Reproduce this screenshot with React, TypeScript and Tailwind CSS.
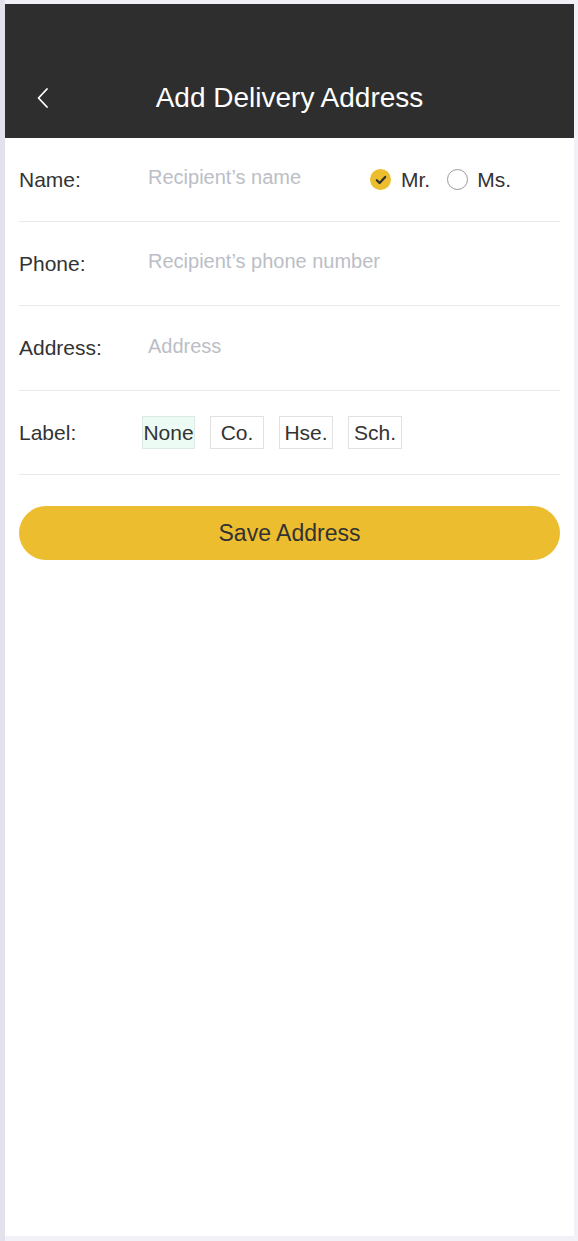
import React from "react";

const font = { fontFamily: '"Liberation Sans", Arial, sans-serif' };

function Row({ label, children, h = "h-[84px]" }: { label: string; children?: React.ReactNode; h?: string }) {
  return (
    <div className={"flex items-center border-b border-[#ebebeb] " + h}>
      <div className="w-[129px] shrink-0 text-[21px] text-[#333333]">{label}</div>
      <div className="flex flex-1 items-center">{children}</div>
    </div>
  );
}

export default function App() {
  const tags = ["None", "Co.", "Hse.", "Sch."];
  return (
    <div className="flex h-[1241px] w-full bg-[#f3f1f8]" style={font}>
      <div className="w-[5px] shrink-0 bg-[#e4e1ec]" />
      <div className="mb-[5px] mr-[4px] mt-[4px] flex flex-1 flex-col bg-white">
        <div className="bg-[#2e2e2e] pt-[54px]">
          <div className="relative flex h-[80px] items-center justify-center">
            <svg
              className="absolute left-[31px] top-[29px]"
              width="14"
              height="22"
              viewBox="0 0 14 22"
              fill="none"
              stroke="white"
              strokeWidth="1.8"
              strokeLinecap="round"
              strokeLinejoin="round"
            >
              <path d="M11 2 L2.5 11 L11 20" />
            </svg>
            <span className="text-[28px] text-white">Add Delivery Address</span>
          </div>
        </div>
        <div className="px-[14px]">
          <Row label="Name:">
            <span className="-mt-[5px] w-[222px] text-[20px] text-[#bbbec6]">Recipient’s name</span>
            <div className="flex items-center">
              <span className="flex h-[21px] w-[21px] items-center justify-center rounded-full bg-[#ebbd2f]">
                <svg width="12" height="10" viewBox="0 0 12 10" fill="none" stroke="#2e2e2e" strokeWidth="2.2" strokeLinecap="round" strokeLinejoin="round">
                  <path d="M1.8 5.2 L4.6 8 L10.2 2" />
                </svg>
              </span>
              <span className="ml-[10px] text-[21px] text-[#333333]">Mr.</span>
              <span className="ml-[17px] h-[21px] w-[21px] rounded-full border-[1.5px] border-[#9a9a9a]" />
              <span className="ml-[9px] text-[21px] text-[#333333]">Ms.</span>
            </div>
          </Row>
          <Row label="Phone:">
            <span className="-mt-[5px] text-[20px] text-[#bbbec6]">Recipient’s phone number</span>
          </Row>
          <Row label="Address:" h="h-[85px]">
            <span className="-mt-[5px] text-[20px] text-[#bbbec6]">Address</span>
          </Row>
          <Row label="Label:">
            <div className="-ml-[6px] flex gap-[15px]">
              {tags.map((t, i) => (
                <span
                  key={t}
                  className={
                    i === 0
                      ? "flex h-[33px] w-[53px] items-center justify-center border border-[#dde9e3] bg-[#ecfbf4] text-[21px] text-[#333333]"
                      : "flex h-[33px] w-[54px] items-center justify-center border border-[#e2e2e2] bg-white text-[21px] text-[#333333]"
                  }
                >
                  {t}
                </span>
              ))}
            </div>
          </Row>
          <button className="mt-[31px] flex h-[54px] w-full items-center justify-center rounded-full bg-[#ebbd2f] text-[23px] text-[#333333]">
            Save Address
          </button>
        </div>
      </div>
    </div>
  );
}
